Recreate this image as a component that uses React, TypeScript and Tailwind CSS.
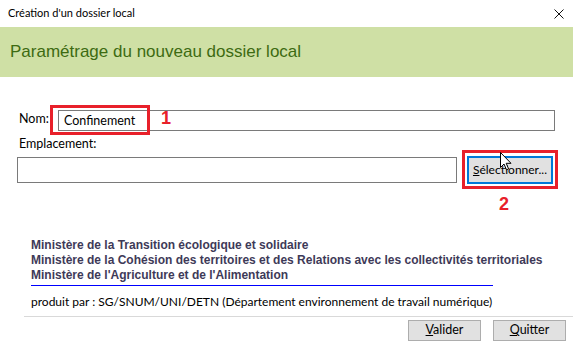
import React from 'react';

const ui = { fontFamily: 'Lato, "Noto Sans", sans-serif' };
const arial = { fontFamily: '"Liberation Sans", Arial, sans-serif' };

const Cursor = () => (
	<svg width="12" height="19" viewBox="0 0 12 19" className="absolute left-[500px] top-[152px]">
		<path d="M0.5 0.5 L0.5 15.5 L4 12 L6.5 17.8 L8.6 16.9 L6.2 11.3 L11 11.3 Z" fill="#fff" stroke="#000" strokeWidth="1" />
	</svg>
);

export default function App() {
	return (
		<div className="relative w-[573px] h-[348px] bg-white overflow-hidden text-black" style={ui}>
			{/* title bar */}
			<div className="flex items-center justify-between h-[27px] pl-[8px] pr-[9px] text-[11px]">
				<span>Création d'un dossier local</span>
				<svg width="10" height="10" viewBox="0 0 10 10">
					<path d="M0.5 0.5 L9.5 9.5 M9.5 0.5 L0.5 9.5" stroke="#111" strokeWidth="1" />
				</svg>
			</div>

			{/* header band */}
			<div className="flex items-center h-[50px] pl-[10px] bg-[#cfe0a5] text-[#3d6b12] text-[17px]" style={arial}>
				Paramétrage du nouveau dossier local
			</div>

			{/* form */}
			<div className="flex items-start mt-[33px] pl-[19px] pr-[18px] text-[12.5px]">
				<span className="w-[39px] pt-[1px] leading-[16px]">Nom:</span>
				<div className="flex-1 h-[21px] border border-[#7a7a7a] flex items-center pl-[5px] pt-[1px]">Confinement</div>
			</div>
			<div className="pl-[19px] mt-[5px] text-[12.5px] leading-[16px]">Emplacement:</div>
			<div className="flex items-center mt-[4px] pl-[17px] text-[12.5px]">
				<div className="w-[440px] h-[26px] border border-[#7a7a7a]" />
				<button className="ml-[10px] w-[86px] h-[28px] bg-[#e1e1e1] border-2 border-[#0078d7] text-[12px] text-black" style={ui}>
					<span className="underline">S</span>électionner...
				</button>
			</div>

			{/* ministries */}
			<div className="mt-[54px] pl-[31px] text-[12px] font-bold text-[#3e3a58] leading-[15px] whitespace-nowrap" style={arial}>
				<div>Ministère de la Transition écologique et solidaire</div>
				<div>Ministère de la Cohésion des territoires et des Relations avec les collectivités territoriales</div>
				<div>Ministère de l'Agriculture et de l'Alimentation</div>
			</div>
			<div className="ml-[31px] mt-[2px] w-[462px] h-px bg-[#0000ff]" />
			<div className="pl-[31px] mt-[8px] text-[12px] leading-[16px]">
				produit par : SG/SNUM/UNI/DETN (Département environnement de travail numérique)
			</div>
			<div className="ml-[24px] mt-[6px] h-px bg-[#d9d9d9]" />

			{/* buttons */}
			<div className="flex justify-end gap-[12px] mt-[3px] pr-[7px]">
				<button className="w-[73px] h-[21px] bg-[#e1e1e1] border border-[#adadad] text-[12.5px] text-black" style={ui}>
					<span className="underline">V</span>alider
				</button>
				<button className="w-[73px] h-[21px] bg-[#e1e1e1] border border-[#adadad] text-[12.5px] text-black" style={ui}>
					<span className="underline">Q</span>uitter
				</button>
			</div>

			{/* annotations */}
			<div className="absolute left-[50px] top-[105px] w-[100px] h-[30px] border-[3px] border-[#e8202a]" />
			<div className="absolute left-[161px] top-[105px] text-[18px] font-bold text-[#e8202a]" style={arial}>1</div>
			<div className="absolute left-[462px] top-[150px] w-[96px] h-[39px] border-[3px] border-[#e8202a]" />
			<div className="absolute left-[499px] top-[191px] text-[18px] font-bold text-[#e8202a]" style={arial}>2</div>
			<Cursor />
		</div>
	);
}
